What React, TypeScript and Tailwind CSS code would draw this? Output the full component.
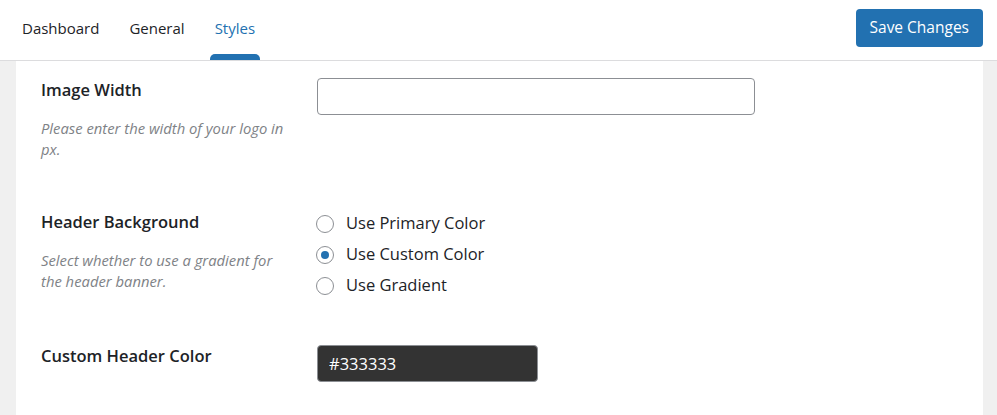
import React, { useState } from "react";

const tabs = ["Dashboard", "General", "Styles"];

const options = [
  { id: "primary", label: "Use Primary Color" },
  { id: "custom", label: "Use Custom Color" },
  { id: "gradient", label: "Use Gradient" },
];

const Radio = ({ checked, label, onSelect }: { checked: boolean; label: string; onSelect: () => void }) => (
  <label className="flex items-center h-[31px] cursor-pointer" onClick={onSelect}>
    <span className="w-[18px] h-[18px] rounded-full border border-[#8c8f94] bg-white flex items-center justify-center">
      {checked && <span className="w-[8px] h-[8px] rounded-full bg-[#2271b1]"></span>}
    </span>
    <span className="ml-[12px] text-[16.5px] text-[#1d2327]">{label}</span>
  </label>
);

const App = () => {
  const [activeTab] = useState("Styles");
  const [background, setBackground] = useState("custom");

  return (
    <div className="min-h-screen bg-[#f0f0f0] font-['Open_Sans',sans-serif] text-[#1d2327]">
      <div className="h-[61px] bg-white border-b border-[#dcdcde] flex items-stretch justify-between pl-[22px] pr-[14px]">
        <div className="flex gap-[30px]">
          {tabs.map((tab) => (
            <div key={tab} className="relative flex items-center pb-[4px] text-[15px]">
              <span className={tab === activeTab ? "text-[#2271b1]" : "text-[#1d2327]"}>{tab}</span>
              {tab === activeTab && (
                <span className="absolute bottom-0 -left-[5px] -right-[5px] h-[6px] rounded-t-[5px] bg-[#2271b1]"></span>
              )}
            </div>
          ))}
        </div>
        <div className="flex items-start pt-[9px]">
          <button className="h-[38px] px-[14px] rounded-[4px] bg-[#2271b1] text-white text-[15.5px]">
            Save Changes
          </button>
        </div>
      </div>

      <div className="ml-[16px] mr-[14px] bg-white px-[25px] pt-[17px] pb-[40px]">
        <div className="flex">
          <div className="w-[276px] shrink-0">
            <div className="text-[16.5px] font-semibold leading-[24px]">Image Width</div>
            <p className="mt-[16px] w-[250px] text-[14.8px] italic leading-[21px] text-[#7e8286]">
              Please enter the width of your logo in px.
            </p>
          </div>
          <input
            type="text"
            className="w-[438px] h-[37px] border border-[#8c8f94] rounded-[4px] px-[12px] text-[16.5px] outline-none"
          />
        </div>

        <div className="flex mt-[48px]">
          <div className="w-[276px] shrink-0 pt-[2px]">
            <div className="text-[16.5px] font-semibold leading-[24px]">Header Background</div>
            <p className="mt-[16px] w-[250px] text-[14.8px] italic leading-[21px] text-[#7e8286]">
              Select whether to use a gradient for the header banner.
            </p>
          </div>
          <div className="flex flex-col -ml-[1px]">
            {options.map((opt) => (
              <Radio
                key={opt.id}
                label={opt.label}
                checked={background === opt.id}
                onSelect={() => setBackground(opt.id)}
              />
            ))}
          </div>
        </div>

        <div className="flex mt-[43px]">
          <div className="w-[276px] shrink-0">
            <div className="text-[16.5px] font-semibold leading-[24px]">Custom Header Color</div>
          </div>
          <input
            type="text"
            defaultValue="#333333"
            className="w-[221px] h-[37px] mt-[1px] bg-[#333333] text-white border border-[#8c8f94] rounded-[4px] px-[11px] text-[16.5px] outline-none"
          />
        </div>
      </div>
    </div>
  );
};

export default App;
